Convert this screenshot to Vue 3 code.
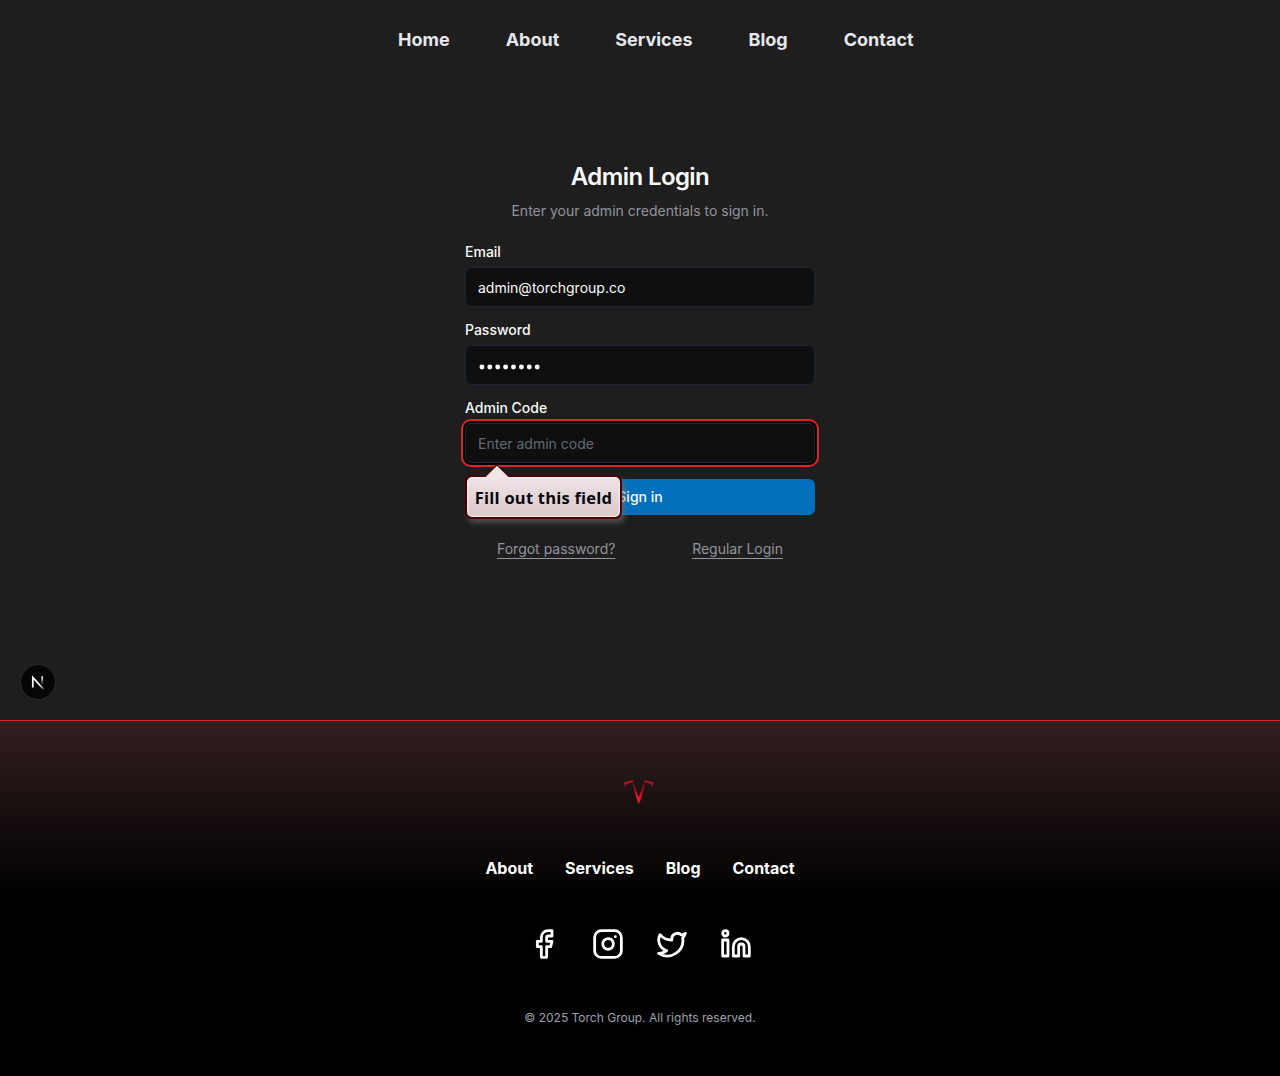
<script setup>
const navLinks = ['Home', 'About', 'Services', 'Blog', 'Contact']
const footerLinks = ['About', 'Services', 'Blog', 'Contact']
</script>

<template>
  <div class="page">
    <main class="main">
      <nav class="nav">
        <a v-for="link in navLinks" :key="link">{{ link }}</a>
      </nav>

      <section class="login">
        <h1>Admin Login</h1>
        <p class="subtitle">Enter your admin credentials to sign in.</p>
        <form class="form" @submit.prevent>
          <div class="field">
            <label>Email</label>
            <div class="input">admin@torchgroup.co</div>
          </div>
          <div class="field">
            <label>Password</label>
            <div class="input">
              <svg class="dots" width="64" height="6" viewBox="0 0 64 6">
                <circle v-for="n in 8" :key="n" :cx="n * 7.9 - 4" cy="3" r="2.45" fill="#fff" />
              </svg>
            </div>
          </div>
          <div class="field">
            <label>Admin Code</label>
            <div class="input focused"><span class="placeholder">Enter admin code</span></div>
          </div>
          <div class="submit">
            <button type="submit">Sign in</button>
            <div class="bubble">
              <svg class="arrow" width="26" height="14" viewBox="0 0 26 14">
                <path d="M0 12.5 13 0 26 12.5Z" fill="#480207" />
                <path d="M1.8 14V12.7L13 1.8 24.2 12.7V14Z" fill="#f0e6e6" />
              </svg>
              <span>Fill out this field</span>
            </div>
          </div>
        </form>
        <div class="links">
          <a>Forgot password?</a>
          <a>Regular Login</a>
        </div>
      </section>

      <div class="badge">
        <svg width="14" height="14" viewBox="0 0 14 14" fill="none">
          <defs>
            <linearGradient id="stem" x1="0" y1="0" x2="0" y2="1">
              <stop offset="0" stop-color="#fff" />
              <stop offset="1" stop-color="#fff" stop-opacity="0" />
            </linearGradient>
            <linearGradient id="slash" gradientUnits="userSpaceOnUse" x1="7" y1="7" x2="13" y2="14">
              <stop offset="0.3" stop-color="#fff" />
              <stop offset="1" stop-color="#fff" stop-opacity="0.3" />
            </linearGradient>
          </defs>
          <path d="M1.8 12.6V2.4L12.4 14" stroke="url(#slash)" stroke-width="1.7" />
          <rect x="10.3" y="1.3" width="1.8" height="9" fill="url(#stem)" />
        </svg>
      </div>
    </main>

    <footer class="footer">
      <svg class="logo" width="32" height="26" viewBox="0 0 32 26">
        <defs>
          <linearGradient id="torch" x1="0" y1="0" x2="0" y2="1">
            <stop offset="0" stop-color="#65101a" />
            <stop offset="0.45" stop-color="#9c111d" />
            <stop offset="0.8" stop-color="#e51b2b" />
            <stop offset="1" stop-color="#a01420" />
          </linearGradient>
        </defs>
        <path d="M9 1 11.5 6 15.8 18.5 20 6 22.5 1 20.8 10 16.5 24.5H15L10.8 10Z" fill="url(#torch)" />
        <path d="M10.5 1 1 3.2 2.2 8 3.6 5 10 3Z" fill="#a81724" />
        <path d="M21 1 30.7 3.6 29.4 8 28.1 5 21.5 3Z" fill="#a81724" />
      </svg>
      <div class="footer-links">
        <a v-for="link in footerLinks" :key="link">{{ link }}</a>
      </div>
      <div class="social">
        <svg viewBox="0 0 24 24">
          <path d="M18 2h-3a5 5 0 0 0-5 5v3H7v4h3v8h4v-8h3l1-4h-4V7a1 1 0 0 1 1-1h3z" />
        </svg>
        <svg viewBox="0 0 24 24">
          <rect x="2" y="2" width="20" height="20" rx="5" ry="5" />
          <path d="M16 11.37A4 4 0 1 1 12.63 8 4 4 0 0 1 16 11.37z" />
          <path d="M17.5 6.5h.01" />
        </svg>
        <svg viewBox="0 0 24 24">
          <path d="M22 4s-.7 2.1-2 3.4c1.6 10-9.4 17.3-18 11.6 2.2.1 4.4-.6 6-2C3 15.5.5 9.6 3 5c2.2 2.6 5.6 4.1 9 4-.9-4.2 4-6.6 7-3.8 1.1 0 3-1.2 3-1.2z" />
        </svg>
        <svg viewBox="0 0 24 24">
          <path d="M16 8a6 6 0 0 1 6 6v7h-4v-7a2 2 0 0 0-4 0v7h-4v-7a6 6 0 0 1 6-6z" />
          <rect x="2" y="9" width="4" height="12" />
          <circle cx="4" cy="4" r="2" />
        </svg>
      </div>
      <p class="copyright">© 2025 Torch Group. All rights reserved.</p>
    </footer>
  </div>
</template>

<style>
body {
  margin: 0;
  background: #000;
}
</style>

<style scoped>
.page,
.page * {
  box-sizing: border-box;
}
.page {
  height: 1076px;
  display: flex;
  flex-direction: column;
  font-family: Inter, sans-serif;
  font-size: 14px;
  line-height: 20px;
  color: #fafafa;
}
.main {
  position: relative;
  height: 720px;
  background: #1e1e1e;
}
.nav {
  display: flex;
  justify-content: center;
  gap: 56px;
  height: 80px;
  padding-left: 31.6px;
  align-items: center;
  font-size: 18px;
  font-weight: 700;
  line-height: 28px;
  color: #e5e7eb;
}
.login {
  width: 350px;
  margin: 81px auto 0;
}
h1 {
  margin: 0;
  font-size: 24px;
  line-height: 32px;
  font-weight: 600;
  letter-spacing: -0.6px;
  text-align: center;
}
.subtitle {
  margin: 8px 0 24px;
  text-align: center;
  color: #94949d;
}
.form {
  display: flex;
  flex-direction: column;
  gap: 16px;
}
.field {
  display: flex;
  flex-direction: column;
  gap: 8px;
}
label {
  line-height: 14px;
  font-weight: 500;
}
.input {
  display: flex;
  align-items: center;
  height: 40px;
  padding: 2px 12px 0;
  border: 1px solid #1c2635;
  border-radius: 6px;
  background: #0f0f0f;
}
.focused {
  box-shadow: 0 0 0 2px #000, 0 0 0 4px #dc2626;
}
.placeholder {
  color: #636975;
}
.dots {
  display: block;
  margin-top: 1px;
}
.submit {
  position: relative;
}
button {
  display: block;
  width: 100%;
  height: 36px;
  border: 0;
  border-radius: 6px;
  background: #0270bd;
  color: #fafafa;
  font: 500 14px/20px Inter, sans-serif;
}
.bubble {
  position: absolute;
  left: 0;
  top: -4px;
  width: 157px;
  height: 44px;
  border: 2px solid #480207;
  border-radius: 7px;
  background: linear-gradient(#eee4e6, #dcc6c9);
  box-shadow: inset 0 0 2px 1px #f8eeee, 3px 4px 5px rgba(110, 110, 110, 0.6);
  color: #05080b;
  font: 700 16.5px/41px "Open Sans", "Noto Sans", sans-serif;
  letter-spacing: 0.22px;
  text-align: center;
  white-space: nowrap;
}
.arrow {
  position: absolute;
  left: 17px;
  top: -13px;
}
.links {
  display: flex;
  justify-content: space-between;
  margin-top: 24px;
  padding: 0 32px;
  color: #94949d;
}
.links a {
  text-decoration: underline;
  text-underline-offset: 4px;
}
.badge {
  position: absolute;
  left: 20px;
  top: 664px;
  width: 36px;
  height: 36px;
  display: flex;
  align-items: center;
  justify-content: center;
  border: 1px solid #2c2c2c;
  border-radius: 50%;
  background: #060606;
}
.footer {
  height: 356px;
  display: flex;
  flex-direction: column;
  align-items: center;
  border-top: 1px solid #dc2127;
  background: linear-gradient(#321f1f, #000 50%);
}
.logo {
  margin: 58px 2px 0 0;
}
.footer-links {
  display: flex;
  gap: 32px;
  margin-top: 51px;
  font-size: 16px;
  line-height: 24px;
  font-weight: 700;
  color: #fff;
}
.social {
  display: flex;
  gap: 32px;
  margin-top: 48px;
}
.social svg {
  width: 32px;
  height: 32px;
  fill: none;
  stroke: #fff;
  stroke-width: 2.1;
  stroke-linecap: round;
  stroke-linejoin: round;
}
.copyright {
  margin: 50px 0 0;
  font-size: 12px;
  line-height: 16px;
  color: #9ca3af;
}
</style>
